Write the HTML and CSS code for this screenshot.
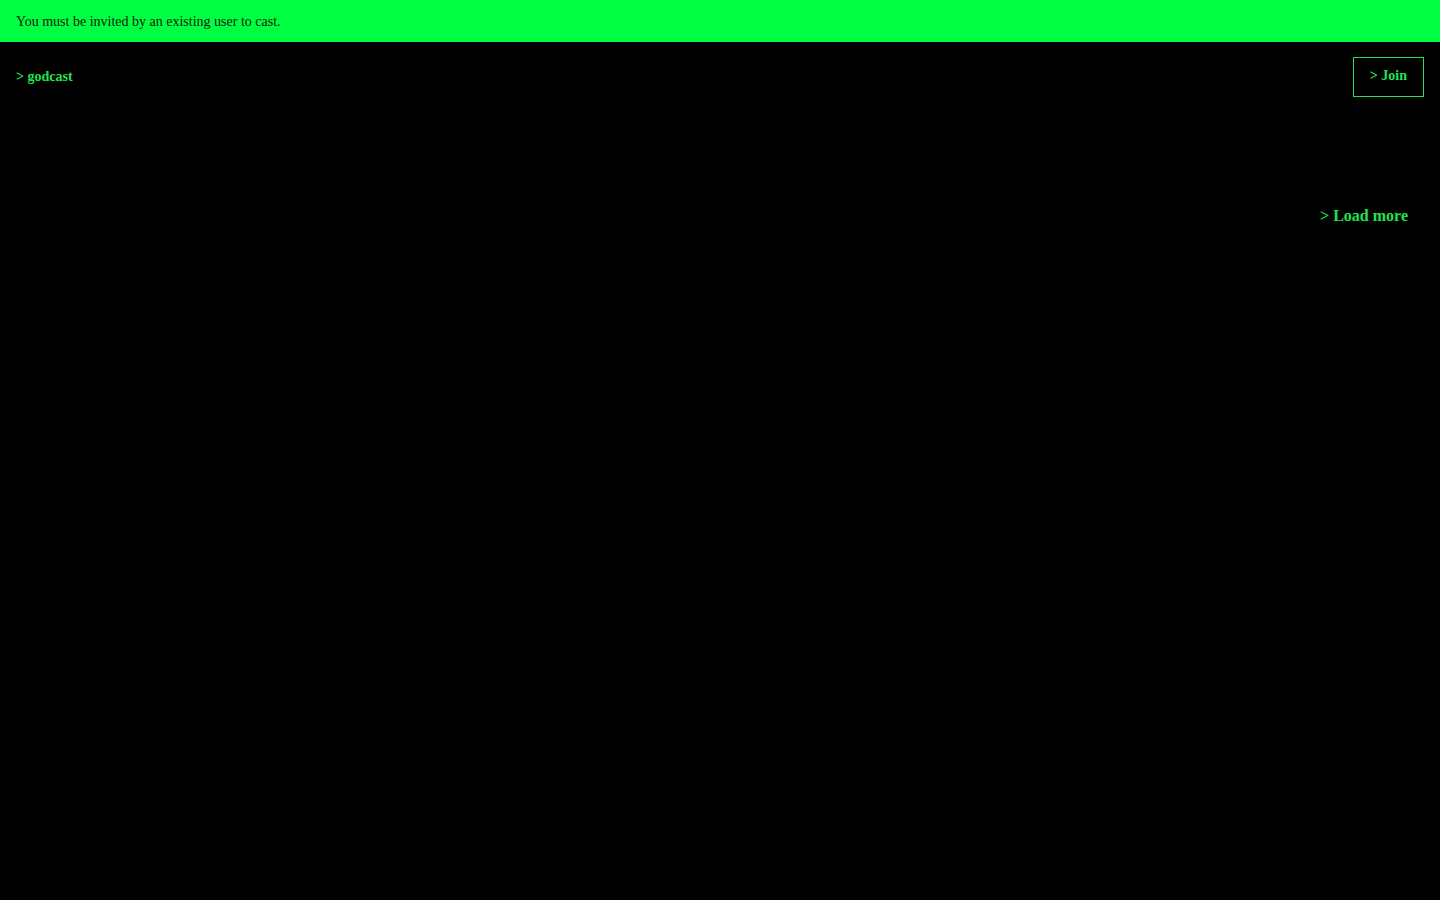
FILE: index.html
```html
<!DOCTYPE html>
<html>
<head>
<meta charset="utf-8">
<link rel="stylesheet" href="styles.css">
</head>
<body>
<div class="banner">You must be invited by an existing user to cast.</div>
<header class="header">
  <a class="brand" href="#">&gt; godcast</a>
  <a class="join" href="#">&gt; Join</a>
</header>
<main class="feed">
  <div class="more-row"><a class="more" href="#">&gt; Load more</a></div>
</main>
</body>
</html>
```
FILE: styles.css
```css
html, body {
  margin: 0;
  padding: 0;
  background: #000;
  font-family: "Liberation Serif", "Times New Roman", serif;
  min-height: 100%;
}
a { text-decoration: none; color: #22e34f; font-weight: bold; }
.banner {
  background: #00ff41;
  color: #0a1a0a;
  font-size: 14px;
  height: 42px;
  box-sizing: border-box;
  padding: 1px 16px 0 16px;
  line-height: 41px;
}
.header {
  display: flex;
  justify-content: space-between;
  align-items: center;
  padding: 15px 16px 0 16px;
}
.brand { font-size: 14px; }
.join {
  font-size: 14px;
  border: 1px solid #22e34f;
  line-height: 36px;
  padding: 0 16px;
  box-sizing: border-box;
  height: 40px;
}
.feed { padding: 0 32px; }
.more-row {
  display: flex;
  justify-content: flex-end;
  padding-top: 107px;
}
.more { font-size: 16px; line-height: 24px; }
```
